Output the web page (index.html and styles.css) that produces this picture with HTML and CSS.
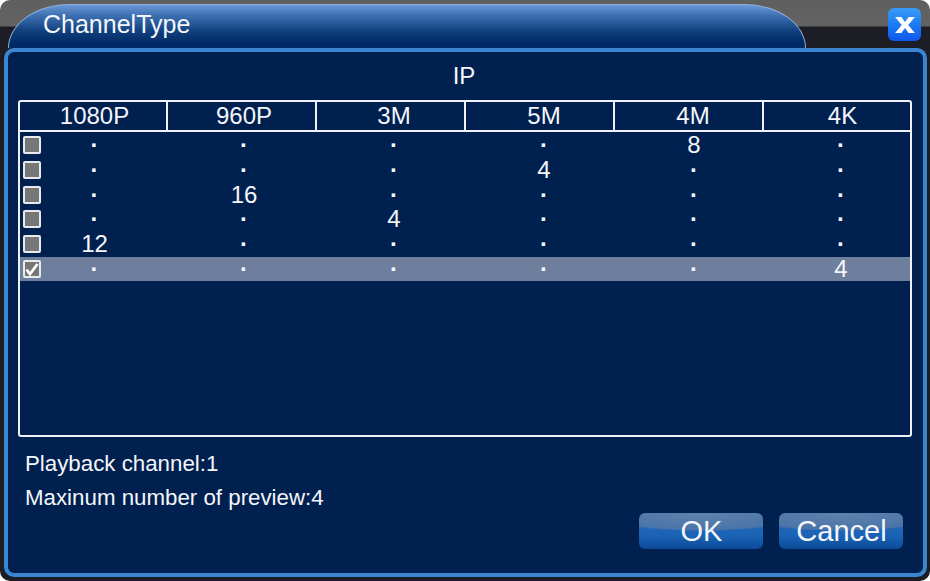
FILE: index.html
```html
<!DOCTYPE html>
<html lang="en">
<head>
<meta charset="utf-8">
<title>ChannelType</title>
<link rel="stylesheet" href="styles.css">
</head>
<body>
<div class="window">
  <header class="titlebar">
    <div class="tab"><span class="tab-title">ChannelType</span></div>
    <button class="close" aria-label="Close">
      <svg width="22" height="18" viewBox="0 0 24 20"><path d="M1 1h7l4 5.6L16 1h7l-7.4 9L23 19h-7l-4-5.6L8 19H1l7.4-9z" fill="#fff"/></svg>
    </button>
  </header>
  <main class="panel">
    <h1 class="panel-title">IP</h1>
    <div class="table">
      <div class="thead">
        <div class="th">1080P</div><div class="th">960P</div><div class="th">3M</div><div class="th">5M</div><div class="th">4M</div><div class="th">4K</div>
      </div>
      <div class="tr"><span class="check"></span><div class="td dot">·</div><div class="td dot">·</div><div class="td dot">·</div><div class="td dot">·</div><div class="td">8</div><div class="td dot">·</div></div>
      <div class="tr"><span class="check"></span><div class="td dot">·</div><div class="td dot">·</div><div class="td dot">·</div><div class="td">4</div><div class="td dot">·</div><div class="td dot">·</div></div>
      <div class="tr"><span class="check"></span><div class="td dot">·</div><div class="td">16</div><div class="td dot">·</div><div class="td dot">·</div><div class="td dot">·</div><div class="td dot">·</div></div>
      <div class="tr"><span class="check"></span><div class="td dot">·</div><div class="td dot">·</div><div class="td">4</div><div class="td dot">·</div><div class="td dot">·</div><div class="td dot">·</div></div>
      <div class="tr"><span class="check"></span><div class="td">12</div><div class="td dot">·</div><div class="td dot">·</div><div class="td dot">·</div><div class="td dot">·</div><div class="td dot">·</div></div>
      <div class="tr selected"><span class="check"><svg width="14" height="14" viewBox="0 0 14 14"><path d="M1.5 7.5 5 12 12.5 2" fill="none" stroke="#fff" stroke-width="2.8"/></svg></span><div class="td dot">·</div><div class="td dot">·</div><div class="td dot">·</div><div class="td dot">·</div><div class="td dot">·</div><div class="td">4</div></div>
    </div>
    <footer class="footer">
      <div class="info">
        <p class="info-line">Playback channel:1</p>
        <p class="info-line">Maxinum number of preview:4</p>
      </div>
      <div class="actions">
        <button class="btn">OK</button>
        <button class="btn">Cancel</button>
      </div>
    </footer>
  </main>
</div>
</body>
</html>
```
FILE: styles.css
```css
* { box-sizing: border-box; }
html, body { margin: 0; padding: 0; background: #fff; }
body { font-family: "Liberation Sans", Arial, sans-serif; color: #f4f6fa; }
.window {
  position: relative;
  width: 930px;
  height: 581px;
  padding: 0 3px 3px 4px;
  border-radius: 10px;
  background: linear-gradient(#5f5f5f 0, #636363 26px, #1d1d25 27px, #1d1d25 100%);
  overflow: hidden;
}
.titlebar { height: 48px; padding: 4px 0 0 4px; }
.tab {
  width: 798px;
  height: 44px;
  padding-left: 34px;
  border: 1px solid #8fb0dd;
  border-bottom: 0;
  border-radius: 62px 62px 0 0 / 44px 44px 0 0;
  background: linear-gradient(#6c98d6 0, #3f72b4 10px, #11407e 26px, #002a66 38px);
}
.tab-title { display: block; font-size: 25px; line-height: 38px; }
.close {
  position: absolute;
  top: 8px;
  left: 888px;
  width: 33px;
  height: 33px;
  padding: 0;
  border: 0;
  border-radius: 6px;
  background: linear-gradient(#3a9cf6, #1a78f4 55%, #0f58ea);
  display: flex;
  align-items: center;
  justify-content: center;
}
.panel {
  height: 529px;
  padding: 0 11px 0 10px;
  border: 4px solid #3a86d0;
  border-radius: 10px;
  background: #002050;
  display: flex;
  flex-direction: column;
}
.panel-title {
  margin: 0;
  height: 48px;
  padding-right: 2px;
  font-size: 24px;
  font-weight: 400;
  line-height: 48px;
  text-align: center;
}
.table {
  height: 337px;
  border: 2px solid #eef1f6;
  border-radius: 3px;
  flex: none;
}
.thead { display: grid; grid-template-columns: 146px repeat(4, 149px) 1fr; height: 30px; border-bottom: 2px solid #eef1f6; }
.th { font-size: 24px; line-height: 27px; text-align: center; border-left: 2px solid #eef1f6; }
.th:first-child { border-left: 0; padding-left: 3px; }
.th:nth-child(2) { padding-left: 5px; }
.th:nth-child(3) { padding-left: 7px; }
.th:nth-child(n+4) { padding-left: 9px; }
.th:last-child { padding-left: 11px; }
.tr {
  position: relative;
  display: grid;
  grid-template-columns: 149px repeat(4, 150px) 1fr;
  height: 24.8px;
  border-top: 1px solid transparent;
  background-clip: padding-box;
}
.td { font-size: 24px; line-height: 24px; text-align: center; }
.td:last-child { padding-left: 3px; }
.dot { font-weight: 700; }
.selected { background-color: #6d7f9c; }
.check {
  position: absolute;
  top: 3px;
  left: 3px;
  width: 18px;
  height: 18px;
  border: 2px solid #e8eaee;
  border-radius: 2px;
  background: #777;
  display: flex;
  align-items: center;
  justify-content: center;
}
.footer {
  flex: 1;
  display: flex;
  justify-content: space-between;
  padding: 10px 9px 24px 7px;
}
.info-line { margin: 0; font-size: 22.3px; line-height: 34px; }
.actions { align-self: flex-end; display: flex; gap: 16px; }
.btn {
  width: 124px;
  height: 36px;
  padding: 0 0 0 1px;
  border: 0;
  border-radius: 6px;
  color: #f4f6fa;
  font: 29px/36px "Liberation Sans", Arial, sans-serif;
  background:
    radial-gradient(ellipse 85% 50% at 50% 0, #5f83ad 0, #4a74a8 93%, transparent 100%),
    linear-gradient(#2a68b0 0, #2066b8 40%, #1a62b4 65%, #0c4a98 100%);
}
```
